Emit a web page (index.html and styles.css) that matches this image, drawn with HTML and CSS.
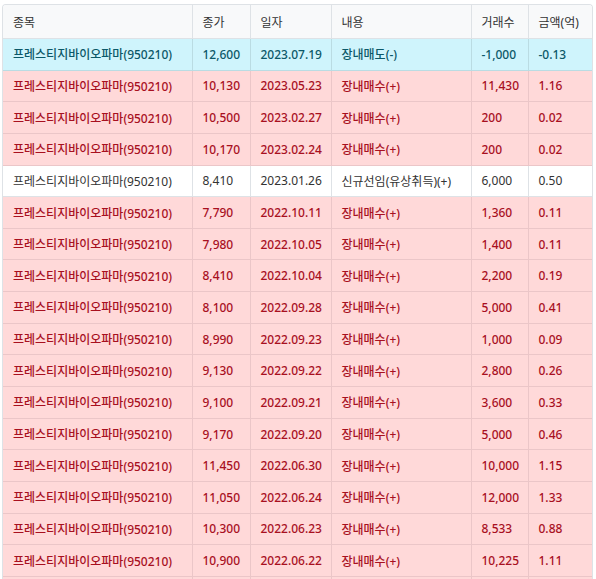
FILE: index.html
```html
<!DOCTYPE html>
<html lang="ko">
<head>
<meta charset="utf-8">
<link rel="stylesheet" href="styles.css">
</head>
<body>
<div class="wrap">
<table class="tbl">
<colgroup>
<col class="c1"><col class="c2"><col class="c3"><col class="c4"><col class="c5"><col class="c6">
</colgroup>
<thead>
<tr><th>종목</th><th>종가</th><th>일자</th><th>내용</th><th>거래수</th><th>금액(억)</th></tr>
</thead>
<tbody>
<tr class="info"><td>프레스티지바이오파마(950210)</td><td>12,600</td><td>2023.07.19</td><td>장내매도(-)</td><td>-1,000</td><td>-0.13</td></tr>
<tr class="danger"><td>프레스티지바이오파마(950210)</td><td>10,130</td><td>2023.05.23</td><td>장내매수(+)</td><td>11,430</td><td>1.16</td></tr>
<tr class="danger"><td>프레스티지바이오파마(950210)</td><td>10,500</td><td>2023.02.27</td><td>장내매수(+)</td><td>200</td><td>0.02</td></tr>
<tr class="danger"><td>프레스티지바이오파마(950210)</td><td>10,170</td><td>2023.02.24</td><td>장내매수(+)</td><td>200</td><td>0.02</td></tr>
<tr class="plain"><td>프레스티지바이오파마(950210)</td><td>8,410</td><td>2023.01.26</td><td>신규선임(유상취득)(+)</td><td>6,000</td><td>0.50</td></tr>
<tr class="danger"><td>프레스티지바이오파마(950210)</td><td>7,790</td><td>2022.10.11</td><td>장내매수(+)</td><td>1,360</td><td>0.11</td></tr>
<tr class="danger"><td>프레스티지바이오파마(950210)</td><td>7,980</td><td>2022.10.05</td><td>장내매수(+)</td><td>1,400</td><td>0.11</td></tr>
<tr class="danger"><td>프레스티지바이오파마(950210)</td><td>8,410</td><td>2022.10.04</td><td>장내매수(+)</td><td>2,200</td><td>0.19</td></tr>
<tr class="danger"><td>프레스티지바이오파마(950210)</td><td>8,100</td><td>2022.09.28</td><td>장내매수(+)</td><td>5,000</td><td>0.41</td></tr>
<tr class="danger"><td>프레스티지바이오파마(950210)</td><td>8,990</td><td>2022.09.23</td><td>장내매수(+)</td><td>1,000</td><td>0.09</td></tr>
<tr class="danger"><td>프레스티지바이오파마(950210)</td><td>9,130</td><td>2022.09.22</td><td>장내매수(+)</td><td>2,800</td><td>0.26</td></tr>
<tr class="danger"><td>프레스티지바이오파마(950210)</td><td>9,100</td><td>2022.09.21</td><td>장내매수(+)</td><td>3,600</td><td>0.33</td></tr>
<tr class="danger"><td>프레스티지바이오파마(950210)</td><td>9,170</td><td>2022.09.20</td><td>장내매수(+)</td><td>5,000</td><td>0.46</td></tr>
<tr class="danger"><td>프레스티지바이오파마(950210)</td><td>11,450</td><td>2022.06.30</td><td>장내매수(+)</td><td>10,000</td><td>1.15</td></tr>
<tr class="danger"><td>프레스티지바이오파마(950210)</td><td>11,050</td><td>2022.06.24</td><td>장내매수(+)</td><td>12,000</td><td>1.33</td></tr>
<tr class="danger"><td>프레스티지바이오파마(950210)</td><td>10,300</td><td>2022.06.23</td><td>장내매수(+)</td><td>8,533</td><td>0.88</td></tr>
<tr class="danger"><td>프레스티지바이오파마(950210)</td><td>10,900</td><td>2022.06.22</td><td>장내매수(+)</td><td>10,225</td><td>1.11</td></tr>
<tr class="danger spacer"><td></td><td></td><td></td><td></td><td></td><td></td></tr>
</tbody>
</table>
</div>
</body>
</html>
```
FILE: styles.css
```css
html, body {
  margin: 0;
  padding: 0;
  background: #ffffff;
  overflow: hidden;
}
body {
  font-family: "Noto Sans", "Noto Sans CJK KR", sans-serif;
  font-size: 12px;
  color: #333;
}
.wrap {
  margin: 4px 3px 0 2px;
  height: 575px;
  border: 1px solid #dee2e6;
  border-bottom: none;
  border-radius: 4px 4px 0 0;
  overflow: hidden;
}
.tbl {
  width: 100%;
  border-collapse: collapse;
  table-layout: fixed;
}
.c1 { width: 189px; }
.c2 { width: 58px; }
.c3 { width: 81px; }
.c4 { width: 140px; }
.c5 { width: 57px; }
.c6 { width: auto; }
.tbl th, .tbl td {
  text-align: left;
  padding: 0 10px;
  border-left: 1px solid #dee2e6;
  border-bottom: 1px solid #dee2e6;
  white-space: nowrap;
  overflow: hidden;
}
.tbl th:first-child, .tbl td:first-child { border-left: none; }
.tbl th {
  height: 33px;
  font-weight: 400;
  background: #f8f9fa;
  color: #333;
}
.tbl td { height: 30.65px; }
.info td {
  background: #cff4fc;
  color: #0b5868;
  font-weight: 500;
  border-color: #badce3;
}
.danger td {
  background: #ffd9d9;
  color: #a8101f;
  font-weight: 500;
  border-color: #ebc6c8;
}
.plain td {
  background: #ffffff;
  color: #333;
}
```
